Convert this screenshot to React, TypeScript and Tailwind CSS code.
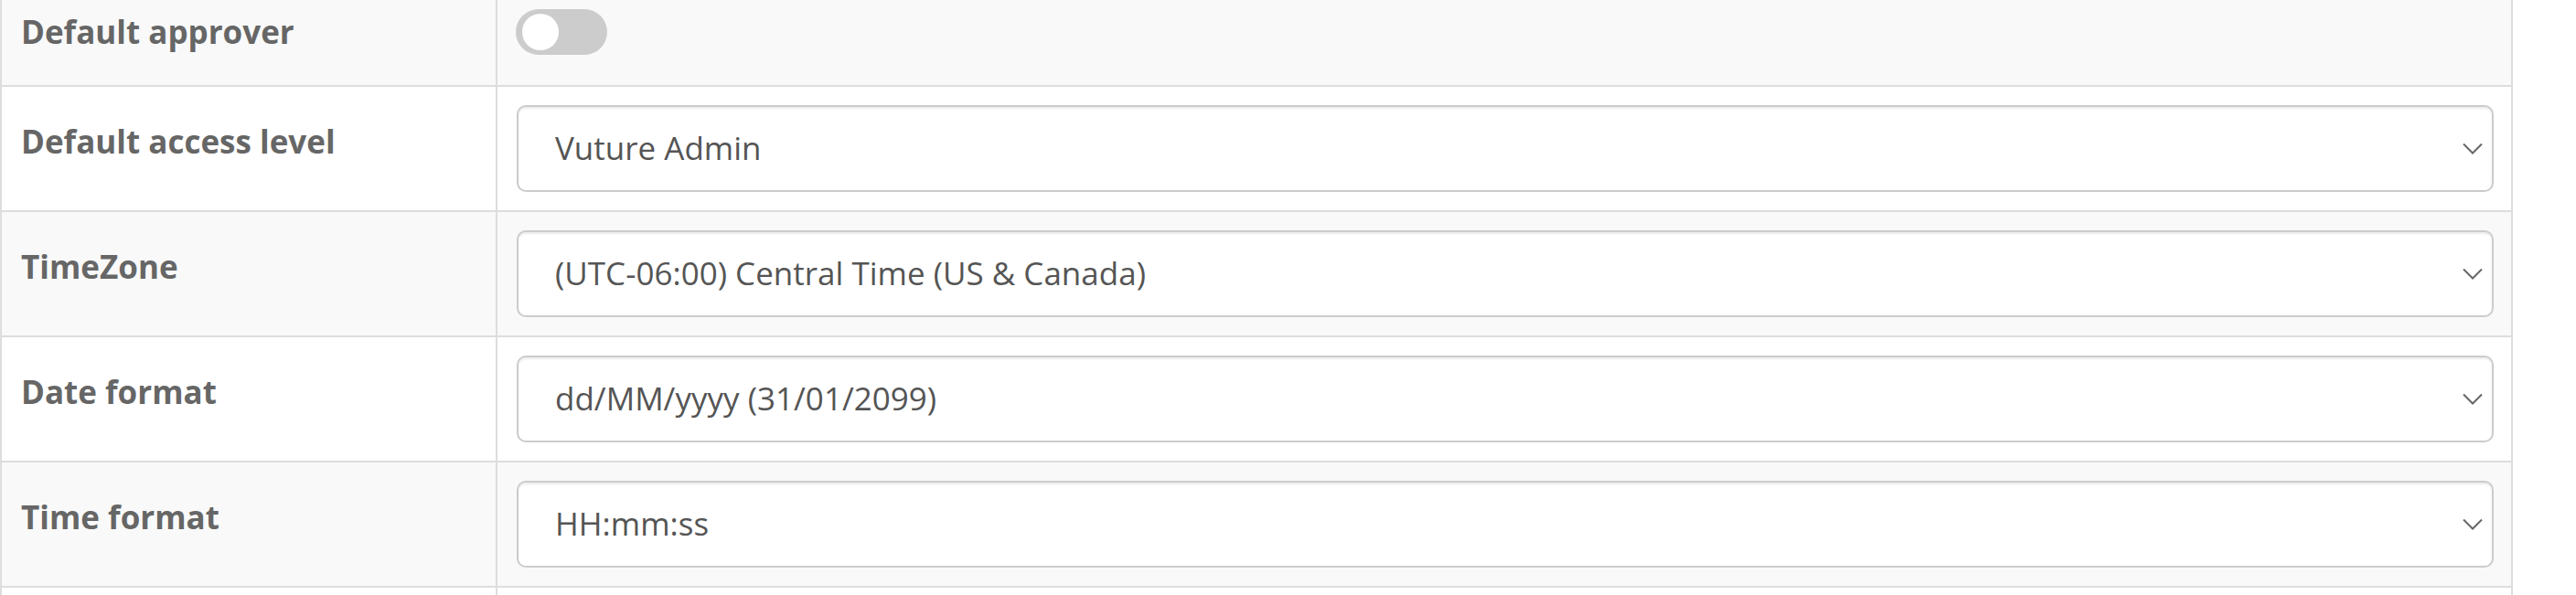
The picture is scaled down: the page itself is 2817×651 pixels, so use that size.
import React from 'react';

const selectRows = [
  { label: 'Default access level', value: 'Vuture Admin',                          bg: 'bg-white' },
  { label: 'TimeZone',             value: '(UTC-06:00) Central Time (US & Canada)', bg: 'bg-[#f9f9f9]' },
  { label: 'Date format',          value: 'dd/MM/yyyy (31/01/2099)',                bg: 'bg-white' },
  { label: 'Time format',          value: 'HH:mm:ss',                              bg: 'bg-[#f9f9f9]' },
];

function Chevron() {
  return (
    <svg width="22" height="13" viewBox="0 0 22 13" fill="none" stroke="#666" strokeWidth="2"
      className="pointer-events-none absolute right-[12px] top-1/2 -translate-y-1/2">
      <path d="M1 1l10 10L21 1" />
    </svg>
  );
}

export default function App() {
  return (
    <div className="w-[2817px] h-[651px] overflow-hidden bg-white font-['Open_Sans',sans-serif]">
      <div className="w-[2748px] border-x-2 border-[#ddd]">
        {/* Default approver — toggle row */}
        <div className="grid grid-cols-[542px_1fr] h-[95px] border-b-2 border-[#ddd] bg-[#f9f9f9]">
          <div className="border-r-2 border-[#ddd] pl-[21px] pt-[9px]">
            <span className="text-[35px] leading-[52px] font-bold text-[#666]">Default approver</span>
          </div>
          <div className="pl-[20px] pt-[10px]">
            <button type="button" className="relative block w-[100px] h-[50px] rounded-full bg-[#ccc]">
              <span className="absolute left-[7px] top-[5px] w-[40px] h-[40px] rounded-full bg-white" />
            </button>
          </div>
        </div>

        {selectRows.map((r) => (
          <div key={r.label} className={`grid grid-cols-[542px_1fr] h-[137px] border-b-2 border-[#ddd] ${r.bg}`}>
            <div className="border-r-2 border-[#ddd] pl-[21px] flex items-center">
              <label className="text-[35px] leading-[52px] font-bold text-[#666] mb-[15px]">{r.label}</label>
            </div>
            <div className="pl-[21px] pr-[19px] flex items-center">
              <div className="relative w-full">
                <select
                  defaultValue={r.value}
                  className="w-full h-[95px] appearance-none rounded-[10px] border-2 border-[#ccc] bg-white pl-[40px] text-[35px] text-[#555] shadow-[inset_0_2px_2px_rgba(0,0,0,0.075)] outline-none"
                >
                  <option>{r.value}</option>
                </select>
                <Chevron />
              </div>
            </div>
          </div>
        ))}

        <div className="grid grid-cols-[542px_1fr] h-[137px] bg-white">
          <div className="border-r-2 border-[#ddd]" />
          <div />
        </div>
      </div>
    </div>
  );
}
